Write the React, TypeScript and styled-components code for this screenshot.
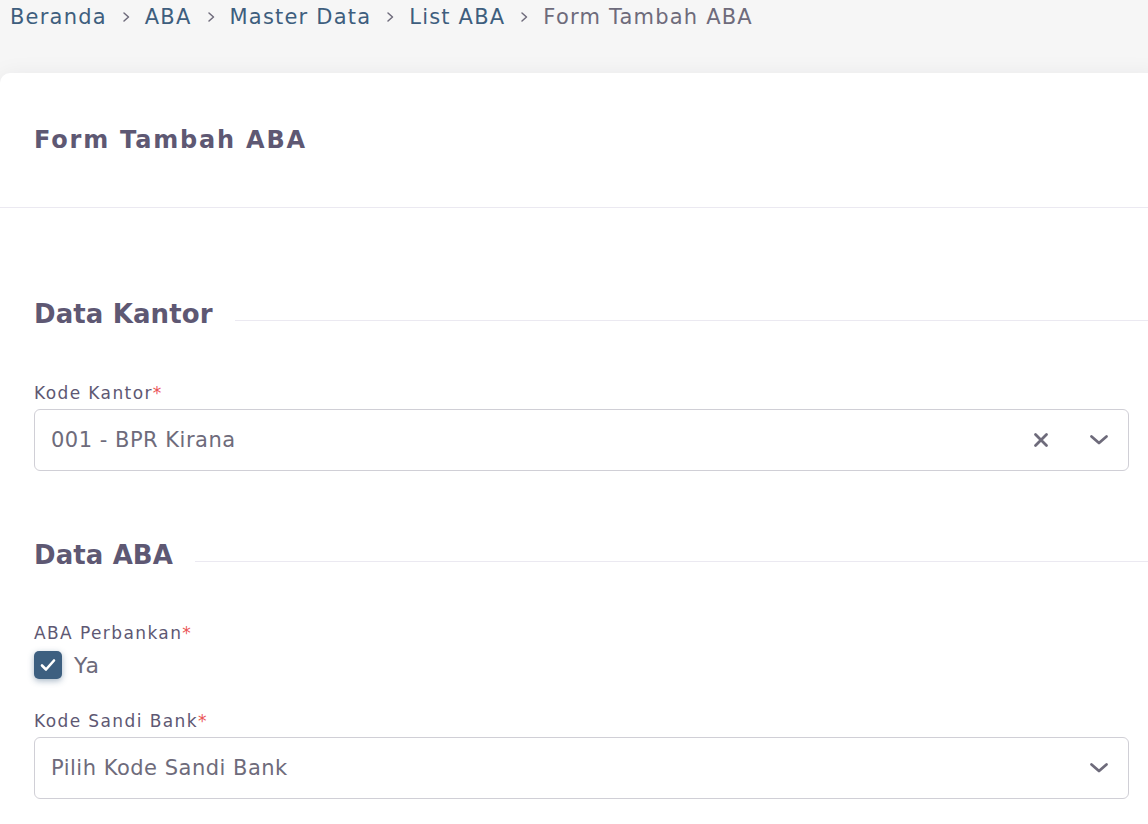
import React from "react";
import styled, { createGlobalStyle } from "styled-components";

const Global = createGlobalStyle`
  html, body { margin: 0; padding: 0; }
  body {
    font-family: "DejaVu Sans", "Noto Sans", sans-serif;
    background: #f5f5f5;
    overflow: hidden;
  }
  * { box-sizing: border-box; }
`;

const Page = styled.div`
  width: 1148px;
  height: 824px;
  overflow: hidden;
  background: #f6f6f6;
`;

const Crumbs = styled.nav`
  display: flex;
  align-items: center;
  height: 33px;
  padding-left: 10px;
  font-size: 21px;
  letter-spacing: 1.2px;
`;

const Crumb = styled.span<{ $current?: boolean }>`
  color: ${(p) => (p.$current ? "#6e6b7b" : "#3e5e7e")};
  white-space: nowrap;
`;

const Sep = styled.svg`
  width: 10px;
  height: 12px;
  margin: 0 14px;
  flex: none;
`;

const Card = styled.section`
  margin-top: 40px;
  width: 1163px;
  background: #fff;
  border-radius: 10px 10px 0 0;
  box-shadow: 0 4px 24px rgba(34, 41, 47, 0.08);
  min-height: 760px;
`;

const CardHeader = styled.header`
  height: 135px;
  display: flex;
  align-items: center;
  padding: 0 34px;
  border-bottom: 1px solid #ebe9f1;
`;

const CardTitle = styled.h2`
  margin: 0;
  font-size: 24px;
  font-weight: 700;
  color: #5e5873;
  letter-spacing: 1.8px;
`;

const CardBody = styled.div`
  padding: 86px 34px 0;
`;

const SectionHead = styled.div<{ $top?: number }>`
  display: flex;
  align-items: center;
  gap: 22px;
  height: 40px;
  margin-top: ${(p) => p.$top ?? 0}px;
`;

const SectionTitle = styled.h3`
  margin: 0;
  font-size: 26px;
  font-weight: 700;
  color: #5e5873;
  white-space: nowrap;
  letter-spacing: 0.1px;
`;

const SectionLine = styled.div`
  flex: 1;
  height: 1px;
  background: #ebe9f1;
  margin-top: 12px;
  margin-right: -34px;
`;

const Field = styled.div<{ $top: number }>`
  margin-top: ${(p) => p.$top}px;
`;

const Label = styled.label`
  display: block;
  font-size: 17px;
  line-height: 24px;
  color: #5e5873;
  letter-spacing: 1.4px;
`;

const Req = styled.span`
  color: #ea5455;
`;

const SelectBox = styled.div`
  margin-top: 4px;
  height: 62px;
  border: 1px solid #d0cfd6;
  border-radius: 6px;
  display: flex;
  align-items: center;
  gap: 40px;
  padding: 0 19px 0 16px;
  background: #fff;
`;

const SelectValue = styled.span`
  flex: 1;
  font-size: 21px;
  color: #6e6b7b;
  letter-spacing: 0.5px;
`;

const IconSlot = styled.span`
  display: flex;
  align-items: center;
  justify-content: center;
`;

const CheckRow = styled.div`
  margin-top: 6px;
  display: flex;
  align-items: center;
  gap: 12px;
`;

const CheckBox = styled.span`
  width: 28px;
  height: 28px;
  border-radius: 5px;
  background: #3d5f80;
  box-shadow: 0 2px 6px rgba(61, 95, 128, 0.45);
  display: flex;
  align-items: center;
  justify-content: center;
`;

const CheckText = styled.span`
  font-size: 22px;
  color: #6e6b7b;
  letter-spacing: 1px;
`;

const Chevron = () => (
  <Sep viewBox="0 0 10 12">
    <path d="M3 2l4.5 4L3 10" fill="none" stroke="#6e6b7b" strokeWidth="1.5" strokeLinecap="round" strokeLinejoin="round" />
  </Sep>
);

const XIcon = () => (
  <svg width="16" height="16" viewBox="0 0 16 16">
    <path d="M2.5 2.5l11 11M13.5 2.5l-11 11" stroke="#6e6b7b" strokeWidth="2.8" strokeLinecap="round" />
  </svg>
);

const Down = () => (
  <svg width="20" height="12" viewBox="0 0 20 12">
    <path d="M2.5 2.5L10 9l7.5-6.5" fill="none" stroke="#6e6b7b" strokeWidth="2.8" strokeLinecap="round" strokeLinejoin="round" />
  </svg>
);

export default function App() {
  return (
    <Page>
      <Global />
      <Crumbs>
        <Crumb>Beranda</Crumb>
        <Chevron />
        <Crumb>ABA</Crumb>
        <Chevron />
        <Crumb>Master Data</Crumb>
        <Chevron />
        <Crumb>List ABA</Crumb>
        <Chevron />
        <Crumb $current>Form Tambah ABA</Crumb>
      </Crumbs>
      <Card>
        <CardHeader>
          <CardTitle>Form Tambah ABA</CardTitle>
        </CardHeader>
        <CardBody>
          <SectionHead>
            <SectionTitle>Data Kantor</SectionTitle>
            <SectionLine />
          </SectionHead>
          <Field $top={47}>
            <Label>
              Kode Kantor<Req>*</Req>
            </Label>
            <SelectBox>
              <SelectValue>001 - BPR Kirana</SelectValue>
              <IconSlot>
                <XIcon />
              </IconSlot>
              <IconSlot>
                <Down />
              </IconSlot>
            </SelectBox>
          </Field>
          <SectionHead $top={64}>
            <SectionTitle>Data ABA</SectionTitle>
            <SectionLine />
          </SectionHead>
          <Field $top={46}>
            <Label>
              ABA Perbankan<Req>*</Req>
            </Label>
            <CheckRow>
              <CheckBox>
                <svg width="20" height="20" viewBox="0 0 20 20">
                  <path d="M4 10.5l4 4 8-9" fill="none" stroke="#fff" strokeWidth="2.6" strokeLinecap="round" strokeLinejoin="round" />
                </svg>
              </CheckBox>
              <CheckText>Ya</CheckText>
            </CheckRow>
          </Field>
          <Field $top={30}>
            <Label>
              Kode Sandi Bank<Req>*</Req>
            </Label>
            <SelectBox>
              <SelectValue>Pilih Kode Sandi Bank</SelectValue>
              <IconSlot>
                <Down />
              </IconSlot>
            </SelectBox>
          </Field>
        </CardBody>
      </Card>
    </Page>
  );
}
